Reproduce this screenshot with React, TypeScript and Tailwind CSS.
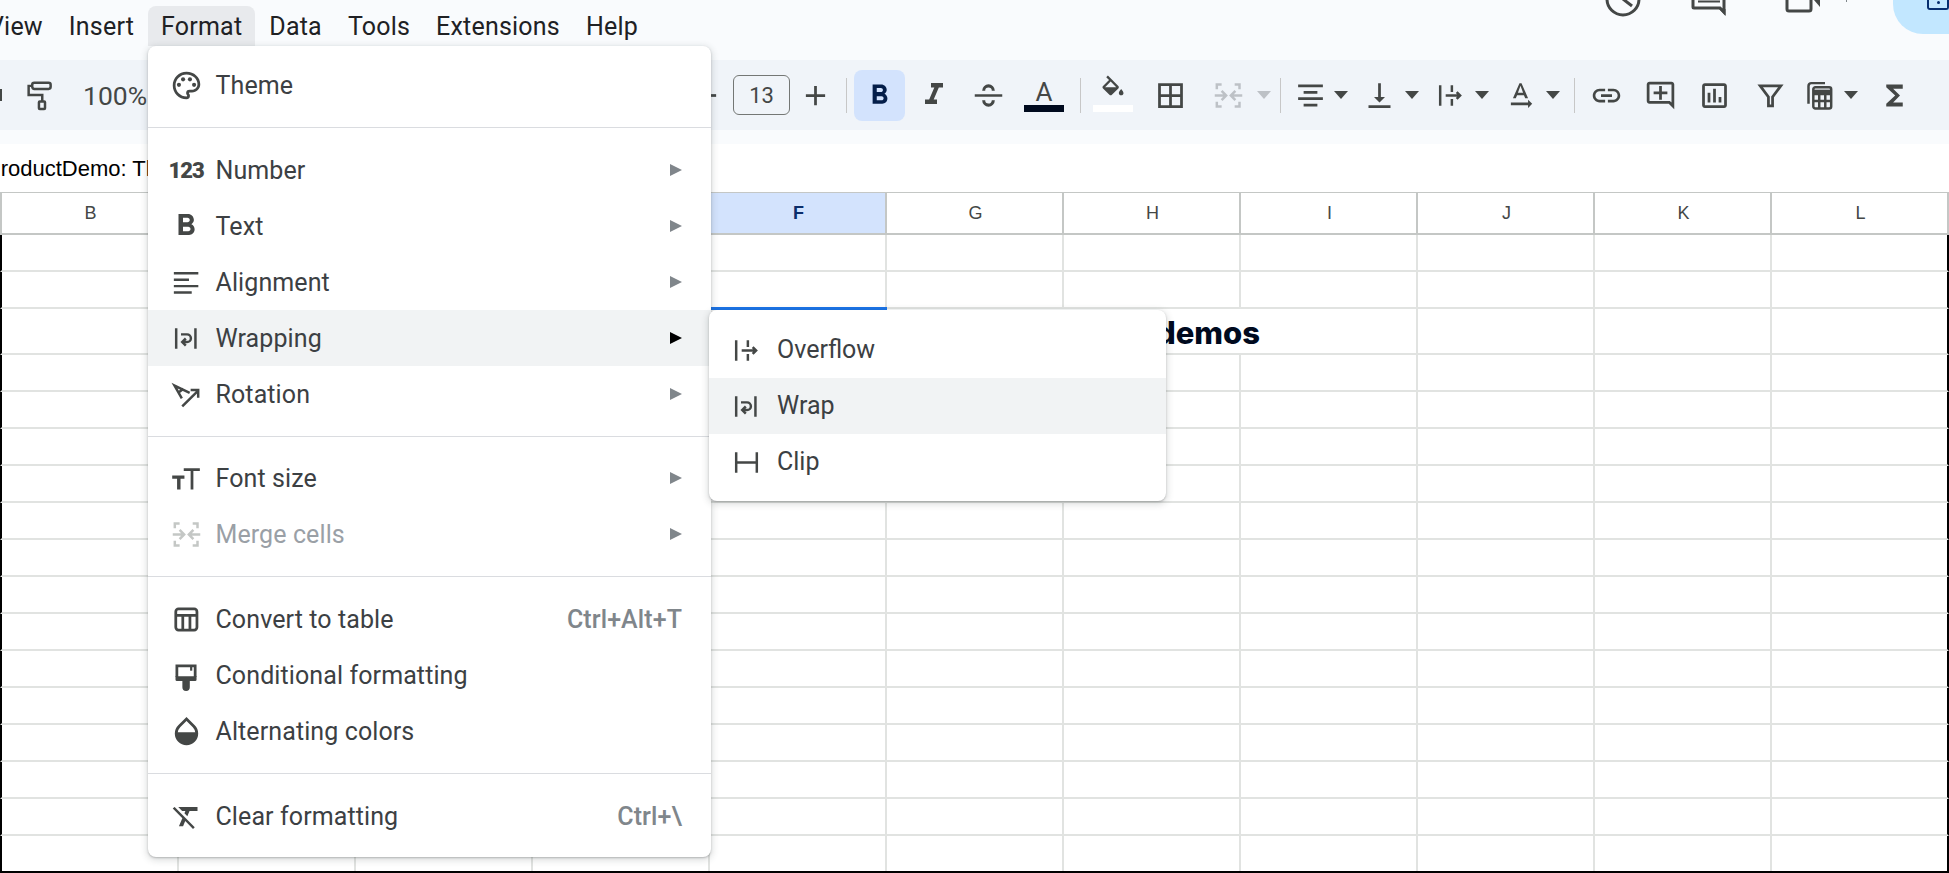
import { ReactNode } from 'react';
import {
    MdAdd, MdBorderAll, MdFormatBold, MdFormatClear, MdFormatItalic,
    MdFunctions, MdLink, MdOutlineAddComment, MdOutlineInsertChart,
    MdOutlinePalette, MdRemove, MdTextRotationNone, MdVerticalAlignBottom
} from 'react-icons/md';

const ICON = 33;

const columns = ['B', 'C', 'D', 'E', 'F', 'G', 'H', 'I', 'J', 'K', 'L'];
const rowHeights = [37, 37, 46, 37, 37, 37, 37, 37, 37, 37, 37, 37, 37, 37, 37, 37, 37];

// Sheets-specific icons that the icon package doesn't have
const Svg = ({ children, className = '' }: { children: ReactNode; className?: string }) => (
    <svg width={ICON} height={ICON} viewBox="0 0 24 24" fill="none" stroke="currentColor" strokeWidth="1.8" className={`shrink-0 ${className}`}>
        {children}
    </svg>
);

const RollerIcon = () => (
    <Svg>
        <rect x="6.700" y="2.700" width="13.400" height="4.500" rx="1.500" />
        <path d="M6.700 5H4.100v6.700H14V16" />
        <rect x="11.600" y="16.300" width="4.400" height="5.500" rx=".6" />
    </Svg>
);

const MergeIcon = ({ className = '' }: { className?: string }) => (
    <Svg className={className}>
        <path d="M3.500 7.500V4H7M16.500 4H20v3.500M3.500 16.500V20H7M16.500 20H20v-3.500" />
        <path d="M2 12h8M7 8.700 10.300 12 7 15.300M22 12h-8M17 8.700 13.700 12l3.300 3.300" />
    </Svg>
);

const OverflowIcon = () => (
    <Svg>
        <path d="M4.500 4.500v15M13 4.500v5M13 14.500v5M8.500 12H19M16.500 9.500 19 12l-2.500 2.500" />
    </Svg>
);

const WrapIcon = () => (
    <Svg>
        <path d="M4.500 4.500v15M18.500 4.500v15" />
        <path d="M8 9h4.400a2.800 2.800 0 0 1 0 5.600H9.500M11.500 12l-2.600 2.600 2.600 2.600" />
    </Svg>
);

const ClipIcon = () => (
    <Svg>
        <path d="M4.500 4.500v15M19.500 4.500v15M4.500 12h15" />
    </Svg>
);

const FilterIcon = () => (
    <Svg>
        <path d="M4.500 5h15l-6 8v6.500h-3V13z" strokeWidth="2" />
    </Svg>
);

const CalcIcon = () => (
    <Svg>
        <path d="M4 18V5a2 2 0 0 1 2-2h10" />
        <rect x="7.500" y="6" width="13" height="15.500" rx="1.500" />
        <path d="M7.500 11h13M7.500 16h13M11.800 11v10M16.200 11v10" />
        <path d="M7.500 9h13" strokeWidth="2.500" />
    </Svg>
);

const TableIcon = () => (
    <Svg>
        <rect x="4.200" y="4.300" width="15.400" height="15.400" rx="2" strokeWidth="2" />
        <path d="M4.200 9h15.400M9.300 9v10.700M14.500 9v10.700" strokeWidth="2" />
    </Svg>
);

const BrushIcon = () => (
    <Svg>
        <path d="M5 13V5h13.300v8" strokeWidth="2" />
        <path d="M15.400 5v3.500" strokeWidth="1.600" />
        <path d="M4 12.500h15.300V15a1 1 0 0 1-1 1h-3.900v4.500a2.700 2.700 0 0 1-5.400 0V16H5a1 1 0 0 1-1-1z" fill="currentColor" stroke="none" />
    </Svg>
);

const DropIcon = () => (
    <Svg>
        <path d="M12 2.900 6.700 8.200a7.500 7.500 0 1 0 10.600 0z" strokeWidth="2" />
        <path d="M4.570 12.500a7.500 7.500 0 1 0 14.860 0z" fill="currentColor" stroke="none" />
    </Svg>
);

const StrikeIcon = () => (
    <Svg>
        <path d="M2 12h20" strokeWidth="1.800" />
        <path d="M8.500 8.500a3.500 3.500 0 0 1 7 0M8.500 15.500a3.500 3.500 0 0 0 7 0" strokeWidth="2.200" />
    </Svg>
);

const AlignLeftIcon = () => (
    <Svg>
        <path d="M2.800 5.300h17.800M2.800 10h11M2.800 14.600h17.800M2.800 19.300h13" strokeWidth="1.700" />
    </Svg>
);

const AlignCenterIcon = () => (
    <Svg>
        <path d="M3 5h18M7 9.700h10M3 14.300h18M7 19h10" strokeWidth="2" />
    </Svg>
);

const RotationIcon = () => (
    <Svg>
        <path d="M8.900 20.700 20.500 9.100M15 8.800h5.500v5.500" />
        <path d="M14.300 10.800 3.300 5.500l5.300 9.300M6.200 10.600l3.600-2.800" />
    </Svg>
);

const FontSizeIcon = () => (
    <Svg>
        <path d="M10 5.500h11.700M16 5.500V20" strokeWidth="2" />
        <path d="M1.600 11h8.900M6.400 11v9" strokeWidth="2.500" />
    </Svg>
);

const Caret = ({ color = 'text-[#444746]' }: { color?: string }) => (
    <svg width="14" height="8" viewBox="0 0 14 8" className={`shrink-0 ${color}`}>
        <path d="M0 0h14L7 8z" fill="currentColor" />
    </svg>
);

const Sep = ({ className }: { className: string }) => <div className={`w-px h-[35px] bg-[#c7c7c7] shrink-0 ${className}`} />;

type Item = {
    label: string;
    icon: ReactNode;
    sub?: boolean;
    hint?: string;
    disabled?: boolean;
    active?: boolean;
};

const Row = ({ item }: { item: Item }) => (
    <div className={`flex items-center h-[56px] pl-[21.5px] pr-[29px] tracking-[0.1px] ${item.active ? 'bg-[#f1f3f4]' : ''}`}>
        <span className={`flex justify-center w-[33px] shrink-0 ${item.disabled ? 'text-[#c4c7c5]' : 'text-[#444746]'}`}>{item.icon}</span>
        <span className={`ml-[13px] pt-[1px] ${item.disabled ? 'text-[#9aa0a6]' : 'text-[#3c4043]'}`}>{item.label}</span>
        {item.hint && <span className="ml-auto pt-[1px] text-[#80868b] font-medium">{item.hint}</span>}
        {item.sub && (
            <svg width="12" height="12" viewBox="0 0 12 12" className={`ml-auto ${item.active ? 'text-black' : 'text-[#80868b]'}`}>
                <path d="M0 0l12 6-12 6z" fill="currentColor" />
            </svg>
        )}
    </div>
);

const SubRow = ({ label, icon, active }: { label: string; icon: ReactNode; active?: boolean }) => (
    <div className={`flex items-center h-[56px] pl-[20.5px] ${active ? 'bg-[#f1f3f4]' : ''}`}>
        <span className="text-[#444746]">{icon}</span>
        <span className="ml-[14.5px]">{label}</span>
    </div>
);

const Divider = ({ className = '' }: { className?: string }) => <div className={`h-px bg-[#dadce0] ${className}`} />;

const md = { size: ICON, className: 'shrink-0' };

export default function App() {
    return (
        <div className="relative w-[1949px] h-[873px] overflow-hidden bg-white font-['Roboto',sans-serif]">
            {/* Menu bar */}
            <div className="flex items-start h-[60px] pt-[6px] bg-[#f9fbfd] text-[25px] text-[#202124]">
                <div className="flex h-[40px] ml-[-25px] tracking-[0.2px]">
                    {['View', 'Insert', 'Format', 'Data', 'Tools', 'Extensions', 'Help'].map(name => (
                        <span
                            key={name}
                            className={`flex items-center h-[40px] pt-[1px] px-[13px] rounded-t-[8px] ${name === 'Format' ? 'bg-[#e8eaed] ml-[1px] mr-[1px]' : ''}`}
                        >
                            {name}
                        </span>
                    ))}
                </div>
                <div className="ml-auto flex items-start mt-[-6px] text-[#444746]">
                    <svg width="36" height="17" viewBox="0 0 36 17" fill="none" stroke="currentColor" strokeWidth="3">
                        <circle cx="18" cy="-1" r="16" />
                        <path d="M18-1l9 7" />
                    </svg>
                    <svg width="36" height="17" viewBox="0 0 36 17" className="ml-[50px]" fill="none" stroke="currentColor" strokeWidth="3">
                        <path d="M2-4V7a1 1 0 0 0 1 1h26l4 4V-4" />
                        <path d="M7 1.500h22" strokeWidth="2" />
                        <path d="M28 9h6.500V16z" fill="currentColor" stroke="none" />
                    </svg>
                    <svg width="36" height="15" viewBox="0 0 36 15" className="ml-[58px]" fill="none" stroke="currentColor" strokeWidth="3">
                        <path d="M2-4V9a2 2 0 0 0 2 2h20a2 2 0 0 0 2-2V-4" />
                        <path d="M29 0l6 7V0z" fill="currentColor" stroke="none" />
                    </svg>
                    <div className="ml-[25px] w-px h-[2px] bg-[#80868b]" />
                    <div className="ml-[46px] w-[56px] h-[34px] bg-[#c2e7ff] rounded-bl-[30px] pl-[34px]">
                        <div className="w-[22px] h-[10px] border-[2.5px] border-t-0 border-[#062e6f] rounded-b-[3px] flex justify-center">
                            <div className="w-[3px] h-[3px] mt-[1px] rounded-full bg-[#062e6f]" />
                        </div>
                    </div>
                </div>
            </div>

            {/* Toolbar */}
            <div className="flex items-center h-[70px] bg-[#f0f4f9] text-[#444746]">
                <div className="flex items-center w-[690px] shrink-0">
                    <div className="w-[2px] h-[12px] bg-[#444746] mr-[21px]" />
                    <RollerIcon />
                    <span className="ml-[27px] pt-[1px] text-[26.500px]">100%</span>
                </div>
                <MdRemove {...md} />
                <div className="flex items-center justify-center ml-[10px] w-[57px] h-[40px] border border-[#747775] rounded-[6px] text-[22px]">13</div>
                <MdAdd {...md} className="shrink-0 ml-[9px]" />
                <Sep className="ml-[14px]" />
                <div className="flex items-center justify-center ml-[7px] w-[51px] h-[51px] rounded-[8px] bg-[#d3e3fd] text-[#041e49]">
                    <MdFormatBold {...md} />
                </div>
                <MdFormatItalic size={36} className="shrink-0 ml-[11px]" />
                <div className="ml-[19.5px]"><StrikeIcon /></div>
                <div className="flex flex-col items-center ml-[19.5px] w-[40px] h-[70px] shrink-0">
                    <span className="h-[40px] pt-[16px] text-[26px] leading-[32px]">A</span>
                    <div className="mt-[5px] w-[40px] h-[7px] bg-[#000a1e]" />
                </div>
                <Sep className="ml-[15.5px]" />
                <div className="flex flex-col items-center ml-[12.5px] w-[40px] h-[70px] shrink-0">
                    <svg width="28" height="29" viewBox="0 0 24 24" className="mt-[15px]">
                        <path fill="currentColor" fillRule="evenodd" d="M16.560 8.940 7.620 0 6.210 1.410l2.380 2.380-5.150 5.150c-.59.59-.59 1.540 0 2.120l5.500 5.500c.29.29.68.44 1.060.44s.77-.15 1.060-.44l5.500-5.500c.59-.58.59-1.530 0-2.120zM5.210 10 10 5.210 14.790 10H5.210zM19 11.500s-2 2.170-2 3.500c0 1.100.9 2 2 2s2-.9 2-2c0-1.330-2-3.500-2-3.500z" />
                    </svg>
                    <div className="mt-[1px] w-[40px] h-[7px] bg-white" />
                </div>
                <MdBorderAll {...md} className="shrink-0 ml-[21px]" />
                <MergeIcon className="ml-[24.5px] text-[#bdc1c6]" />
                <div className="ml-[12px]"><Caret color="text-[#bdc1c6]" /></div>
                <Sep className="ml-[9px]" />
                <div className="ml-[13px]"><AlignCenterIcon /></div>
                <div className="ml-[7.5px]"><Caret /></div>
                <MdVerticalAlignBottom {...md} className="shrink-0 ml-[15px]" />
                <div className="ml-[9px]"><Caret /></div>
                <div className="ml-[14.5px]"><OverflowIcon /></div>
                <div className="ml-[8.5px]"><Caret /></div>
                <MdTextRotationNone {...md} className="shrink-0 ml-[15px]" />
                <div className="ml-[9px]"><Caret /></div>
                <Sep className="ml-[13.5px]" />
                <MdLink {...md} className="shrink-0 ml-[15px]" />
                <MdOutlineAddComment {...md} className="shrink-0 ml-[21.5px]" />
                <MdOutlineInsertChart {...md} className="shrink-0 ml-[21px]" />
                <div className="ml-[22.5px]"><FilterIcon /></div>
                <div className="ml-[16.5px]"><CalcIcon /></div>
                <div className="ml-[8px]"><Caret /></div>
                <MdFunctions {...md} className="shrink-0 ml-[19.5px]" />
            </div>
            <div className="h-[14px] bg-[#f9fbfd]" />

            {/* Formula bar */}
            <div className="flex items-center h-[48px] ml-[-14px] text-[22px] text-black font-['Liberation_Sans',sans-serif] whitespace-nowrap">
                ProductDemo: Th
            </div>

            {/* Column headers */}
            <div className="grid grid-cols-[179px_repeat(10,177px)] h-[43px] border-t border-t-[#c4c7c5] font-['Liberation_Sans',sans-serif] text-[18px] text-[#444746]">
                {columns.map((col, i) => (
                    <div
                        key={col}
                        className={`flex items-center justify-center pl-[2px] border-b-2 border-b-[#c4c7c5] border-r-2 border-r-[#c4c7c5] ${i === 0 ? 'border-l-2 border-l-[#c4c7c5]' : ''} ${col === 'F' ? 'bg-[#d3e3fd] font-bold text-[#0b2e6b]' : ''}`}
                    >
                        {col}
                    </div>
                ))}
            </div>

            {/* Cells */}
            <div className="h-[638px] overflow-hidden border-b-2 border-b-black">
                {rowHeights.map((h, r) => (
                    <div key={r} className="grid grid-cols-[179px_repeat(10,177px)]" style={{ height: h }}>
                        {columns.map((col, i) => {
                            const merged = r === 2 && ['F', 'G', 'H'].includes(col);
                            return (
                                <div
                                    key={col}
                                    className={`relative border-b-2 border-b-[#e1e3e1] ${merged ? '' : 'border-r-2'} ${i === columns.length - 1 ? 'border-r-black' : 'border-r-[#e1e3e1]'} ${i === 0 ? 'border-l-2 border-l-black' : ''}`}
                                >
                                    {r === 2 && col === 'F' && <div className="absolute -top-[2px] left-0 right-0 h-[3px] bg-[#1a73e8]" />}
                                    {r === 2 && col === 'H' && (
                                        <span className="absolute right-[-19px] top-[4px] font-['Inter',sans-serif] font-extrabold text-[31px] leading-[40px] text-[#000a1e]">demos</span>
                                    )}
                                </div>
                            );
                        })}
                    </div>
                ))}
            </div>

            {/* Format menu */}
            <div className="absolute left-[148px] top-[46px] w-[563px] h-[811px] pt-[11px] bg-white rounded-[8px] shadow-[0_2px_6px_2px_rgba(60,64,67,0.15),0_1px_2px_rgba(60,64,67,0.3)] text-[25px] z-10">
                <Row item={{ label: 'Theme', icon: <MdOutlinePalette {...md} /> }} />
                <Divider className="mt-[14px] mb-[14px]" />
                <Row item={{ label: 'Number', sub: true, icon: <span className="flex items-center justify-center w-[33px] h-[33px] font-black text-[22px] tracking-[-1px]">123</span> }} />
                <Row item={{ label: 'Text', sub: true, icon: <MdFormatBold size={36} className="shrink-0" /> }} />
                <Row item={{ label: 'Alignment', sub: true, icon: <AlignLeftIcon /> }} />
                <Row item={{ label: 'Wrapping', sub: true, active: true, icon: <WrapIcon /> }} />
                <Row item={{ label: 'Rotation', sub: true, icon: <RotationIcon /> }} />
                <Divider className="mt-[14px] mb-[13px]" />
                <Row item={{ label: 'Font size', sub: true, icon: <FontSizeIcon /> }} />
                <Row item={{ label: 'Merge cells', sub: true, disabled: true, icon: <MergeIcon /> }} />
                <Divider className="mt-[14px] mb-[14px]" />
                <Row item={{ label: 'Convert to table', hint: 'Ctrl+Alt+T', icon: <TableIcon /> }} />
                <Row item={{ label: 'Conditional formatting', icon: <BrushIcon /> }} />
                <Row item={{ label: 'Alternating colors', icon: <DropIcon /> }} />
                <Divider className="mt-[14px] mb-[14px]" />
                <Row item={{ label: 'Clear formatting', hint: 'Ctrl+\\', icon: <MdFormatClear {...md} /> }} />
            </div>

            {/* Wrapping submenu */}
            <div className="absolute left-[709px] top-[310px] w-[457px] h-[191px] pt-[12px] bg-white rounded-[8px] shadow-[0_2px_6px_2px_rgba(60,64,67,0.15),0_1px_2px_rgba(60,64,67,0.3)] text-[25px] text-[#3c4043] z-20">
                <SubRow label="Overflow" icon={<OverflowIcon />} />
                <SubRow label="Wrap" icon={<WrapIcon />} active />
                <SubRow label="Clip" icon={<ClipIcon />} />
            </div>
        </div>
    );
}
